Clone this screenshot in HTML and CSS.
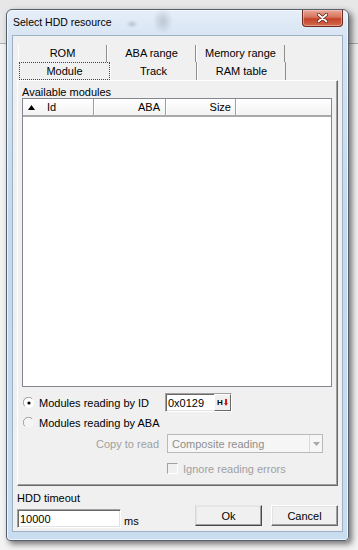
FILE: index.html
```html
<!DOCTYPE html>
<html lang="en">

<head>
  <meta charset="UTF-8">
  <meta name="viewport" content="width=device-width, initial-scale=1.0">
  <title>Select HDD resource</title>
  <link rel="stylesheet" href="styles.css">
</head>

<body>
  <div class="window">
    <div class="titlebar">
      <span class="title">Select HDD resource</span>
      <div class="close">
        <svg width="11" height="10" viewBox="0 0 11 10">
          <path d="M1.5 1.5 L9.5 8.5 M9.5 1.5 L1.5 8.5" stroke="#5a1e14" stroke-width="3.4" stroke-linecap="round" />
          <path d="M1.5 1.5 L9.5 8.5 M9.5 1.5 L1.5 8.5" stroke="#fff" stroke-width="1.8" stroke-linecap="round" />
        </svg>
      </div>
    </div>

    <div class="client">
      <div class="tabs">
        <div class="tab-row back">
          <div class="tab">ROM</div>
          <div class="tab">ABA range</div>
          <div class="tab">Memory range</div>
        </div>
        <div class="tab-row front">
          <div class="tab active">Module</div>
          <div class="tab narrow">Track</div>
          <div class="tab">RAM table</div>
        </div>
      </div>

      <div class="panel">
        <div class="caption">Available modules</div>
        <div class="listview">
          <div class="lv-header">
            <div class="col col-id">
              <svg class="sort" width="7" height="5" viewBox="0 0 7 5">
                <path d="M3.5 0 L7 5 L0 5 Z" fill="#000" />
              </svg>
              Id
            </div>
            <div class="col col-aba">ABA</div>
            <div class="col col-size">Size</div>
          </div>
        </div>

        <div class="row row-id">
          <label class="radio-label">
            <svg class="radio" width="12" height="12" viewBox="0 0 12 12">
              <circle cx="6" cy="6" r="5" fill="#fff" />
              <path d="M1.8 9.2 A5 5 0 0 1 9.2 1.8" stroke="#9c9c9c" stroke-width="1" fill="none" />
              <circle cx="6" cy="6" r="1.6" fill="#000" />
            </svg>
            Modules reading by ID
          </label>
          <div class="field id-field">
            <span class="value">0x0129</span>
            <span class="hbtn">
              <b>H</b>
              <svg width="4" height="7" viewBox="0 0 4 7">
                <path d="M1 0 H3 V4 H4 L2 7 L0 4 H1 Z" fill="#d21a1a" />
              </svg>
            </span>
          </div>
        </div>

        <div class="row row-aba">
          <label class="radio-label">
            <svg class="radio" width="12" height="12" viewBox="0 0 12 12">
              <circle cx="6" cy="6" r="5" fill="#f4f4f4" />
              <path d="M1.8 9.2 A5 5 0 0 1 9.2 1.8" stroke="#9c9c9c" stroke-width="1" fill="none" />
            </svg>
            Modules reading by ABA
          </label>
        </div>

        <div class="row row-copy">
          <span class="copy-label">Copy to read</span>
          <div class="combo">
            <span class="value">Composite reading</span>
            <span class="combo-btn">
              <svg width="7" height="4" viewBox="0 0 7 4">
                <path d="M0 0 H7 L3.5 4 Z" fill="#a8a8a8" />
              </svg>
            </span>
          </div>
        </div>

        <div class="row row-check">
          <span class="checkbox"></span>
          <span class="disabled">Ignore reading errors</span>
        </div>
      </div>

      <div class="footer">
        <div class="timeout">
          <div class="timeout-label">HDD timeout</div>
          <div class="timeout-row">
            <div class="field timeout-field"><span class="value">10000</span></div>
            <span class="unit">ms</span>
          </div>
        </div>
        <div class="buttons">
          <button class="btn default">Ok</button>
          <button class="btn">Cancel</button>
        </div>
      </div>
    </div>
  </div>
</body>

</html>
```

FILE: styles.css
```css
* {
  box-sizing: border-box;
}

body {
  margin: 0;
  width: 358px;
  height: 550px;
  overflow: hidden;
  background: linear-gradient(#e7e7e7 0, #e7e7e7 43px, #adadad 43px, #adadad 44px, #f3f3f3 44px);
  font-family: "Liberation Sans", Arial, sans-serif;
  font-size: 11px;
  color: #000;
}

.window {
  margin: 9px 0 0 6px;
  width: 343px;
  height: 532px;
  border: 1px solid #56616e;
  border-radius: 6px 6px 4px 4px;
  background: linear-gradient(#e6eef8, #d5e3f2 30px, #c4d8ee 220px, #cadcf0);
  box-shadow: 3px 3px 6px rgba(0, 0, 0, .55), inset 0 0 0 1px rgba(255, 255, 255, .65);
  padding: 0 5px 8px;
  display: flex;
  flex-direction: column;
}

/* title bar */

.titlebar {
  height: 25px;
  display: flex;
  align-items: flex-start;
  background:
    radial-gradient(6px 4px at 120px 14px, rgba(110, 125, 140, .35), transparent),
    radial-gradient(10px 13px at 151px 11px, rgba(120, 135, 150, .35), transparent);
}

.title {
  margin: 6px 0 0 1px;
  font-size: 10.5px;
  line-height: 13px;
}

.close {
  margin-left: auto;
  width: 41px;
  height: 17px;
  border: 1px solid #6d2b20;
  border-top: none;
  border-radius: 0 0 4px 4px;
  background: linear-gradient(#e9a899, #d7735c 45%, #c2442a 55%, #d36a4c);
  box-shadow: inset 0 0 0 1px rgba(255, 220, 210, .45);
  display: flex;
  align-items: center;
  justify-content: center;
}

/* client */

.client {
  flex: 1;
  border: 1px solid #9eb0c4;
  background: #f0f0f0;
  padding: 9px 4px 0 4px;
  display: flex;
  flex-direction: column;
}

.tabs {
  margin-left: 1px;
}

.tab-row {
  display: flex;
}

.tab {
  width: 89px;
  height: 17px;
  line-height: 17px;
  text-align: center;
  border-left: 1px solid #fff;
  border-right: 1px solid #8d8d8d;
}

.front .tab {
  height: 18px;
  line-height: 18px;
}

.tab.active {
  width: 91px;
  margin-left: 1px;
  border: 1px dotted #444;
  line-height: 16px;
}

.tab.narrow {
  width: 87px;
}

.panel {
  height: 406px;
  border: 1px solid;
  border-color: #fff #696969 #696969 #fff;
  box-shadow: inset -1px -1px #a0a0a0;
  padding: 5px 4px 0 4px;
}

.caption {
  line-height: 12px;
}

.listview {
  width: 310px;
  height: 289px;
  border: 1px solid #828790;
  background: #fff;
}

.lv-header {
  display: flex;
  height: 18px;
  border-bottom: 2px solid #a9a9a9;
  background: linear-gradient(#fff, #f3f3f3);
}

.col {
  height: 16px;
  line-height: 16px;
  border-right: 1px solid #a0a0a0;
  box-shadow: 1px 0 #fff;
}

.col-id {
  width: 71px;
  padding-left: 5px;
  display: flex;
  align-items: center;
}

.sort {
  margin-right: 12px;
}

.col-aba {
  width: 72px;
  text-align: right;
  padding-right: 5px;
}

.col-size {
  width: 70px;
  text-align: right;
  padding-right: 4px;
}

/* options */

.row {
  display: flex;
  align-items: center;
}

.radio-label {
  display: flex;
  align-items: center;
  width: 143px;
}

.radio {
  margin: 0 4px 0 1px;
}

.row-id {
  margin-top: 6px;
  height: 19px;
}

.row-aba {
  margin-top: 4px;
  height: 14px;
}

.field {
  height: 19px;
  border: 1px solid;
  border-color: #a0a0a0 #fff #fff #a0a0a0;
  box-shadow: inset 1px 1px #696969, inset -1px -1px #e3e3e3;
  background: #fff;
  display: flex;
  align-items: center;
}

.field .value {
  padding-left: 2px;
  flex: 1;
}

.id-field {
  width: 67px;
}

.hbtn {
  width: 17px;
  height: 17px;
  border: 1px solid;
  border-color: #fff #696969 #696969 #fff;
  background: #f0f0f0;
  display: flex;
  align-items: center;
  justify-content: center;
  gap: 1px;
}

.hbtn b {
  font-size: 8px;
  line-height: 8px;
}

.row-copy {
  margin-top: 4px;
  height: 19px;
}

.copy-label {
  width: 137px;
  margin-right: 8px;
  text-align: right;
  color: #a0a0a0;
}

.combo {
  width: 156px;
  height: 19px;
  border: 1px solid #b9b9b9;
  background: #f6f6f6;
  display: flex;
  align-items: center;
  color: #8f8f8f;
}

.combo .value {
  flex: 1;
  padding-left: 4px;
}

.combo-btn {
  width: 13px;
  height: 17px;
  border-left: 1px solid #dadada;
  display: flex;
  align-items: center;
  justify-content: center;
}

.row-check {
  margin-top: 9px;
  height: 13px;
  padding-left: 145px;
}

.checkbox {
  width: 11px;
  height: 11px;
  border: 1px solid;
  border-color: #a0a0a0 #fff #fff #a0a0a0;
  background: #f0f0f0;
  margin-right: 5px;
}

.disabled {
  color: #a0a0a0;
}

/* footer */

.footer {
  display: flex;
  align-items: flex-end;
  margin-top: 6px;
}

.timeout {
  width: 179px;
}

.timeout-label {
  line-height: 12px;
}

.timeout-row {
  margin-top: 5px;
  display: flex;
  align-items: flex-end;
}

.timeout-field {
  width: 104px;
}

.unit {
  margin-left: 3px;
  line-height: 12px;
  margin-bottom: 1px;
}

.buttons {
  display: flex;
  gap: 9px;
  margin-bottom: 2px;
}

.btn {
  width: 67px;
  height: 21px;
  padding: 0;
  font: inherit;
  color: #000;
  border: 1px solid;
  border-color: #fff #696969 #696969 #fff;
  box-shadow: inset -1px -1px #a0a0a0, inset 1px 1px #e3e3e3;
  background: #f0f0f0;
}

.btn.default {
  border-color: #e8e8e8 #4a4a4a #4a4a4a #d8d8d8;
}
```
